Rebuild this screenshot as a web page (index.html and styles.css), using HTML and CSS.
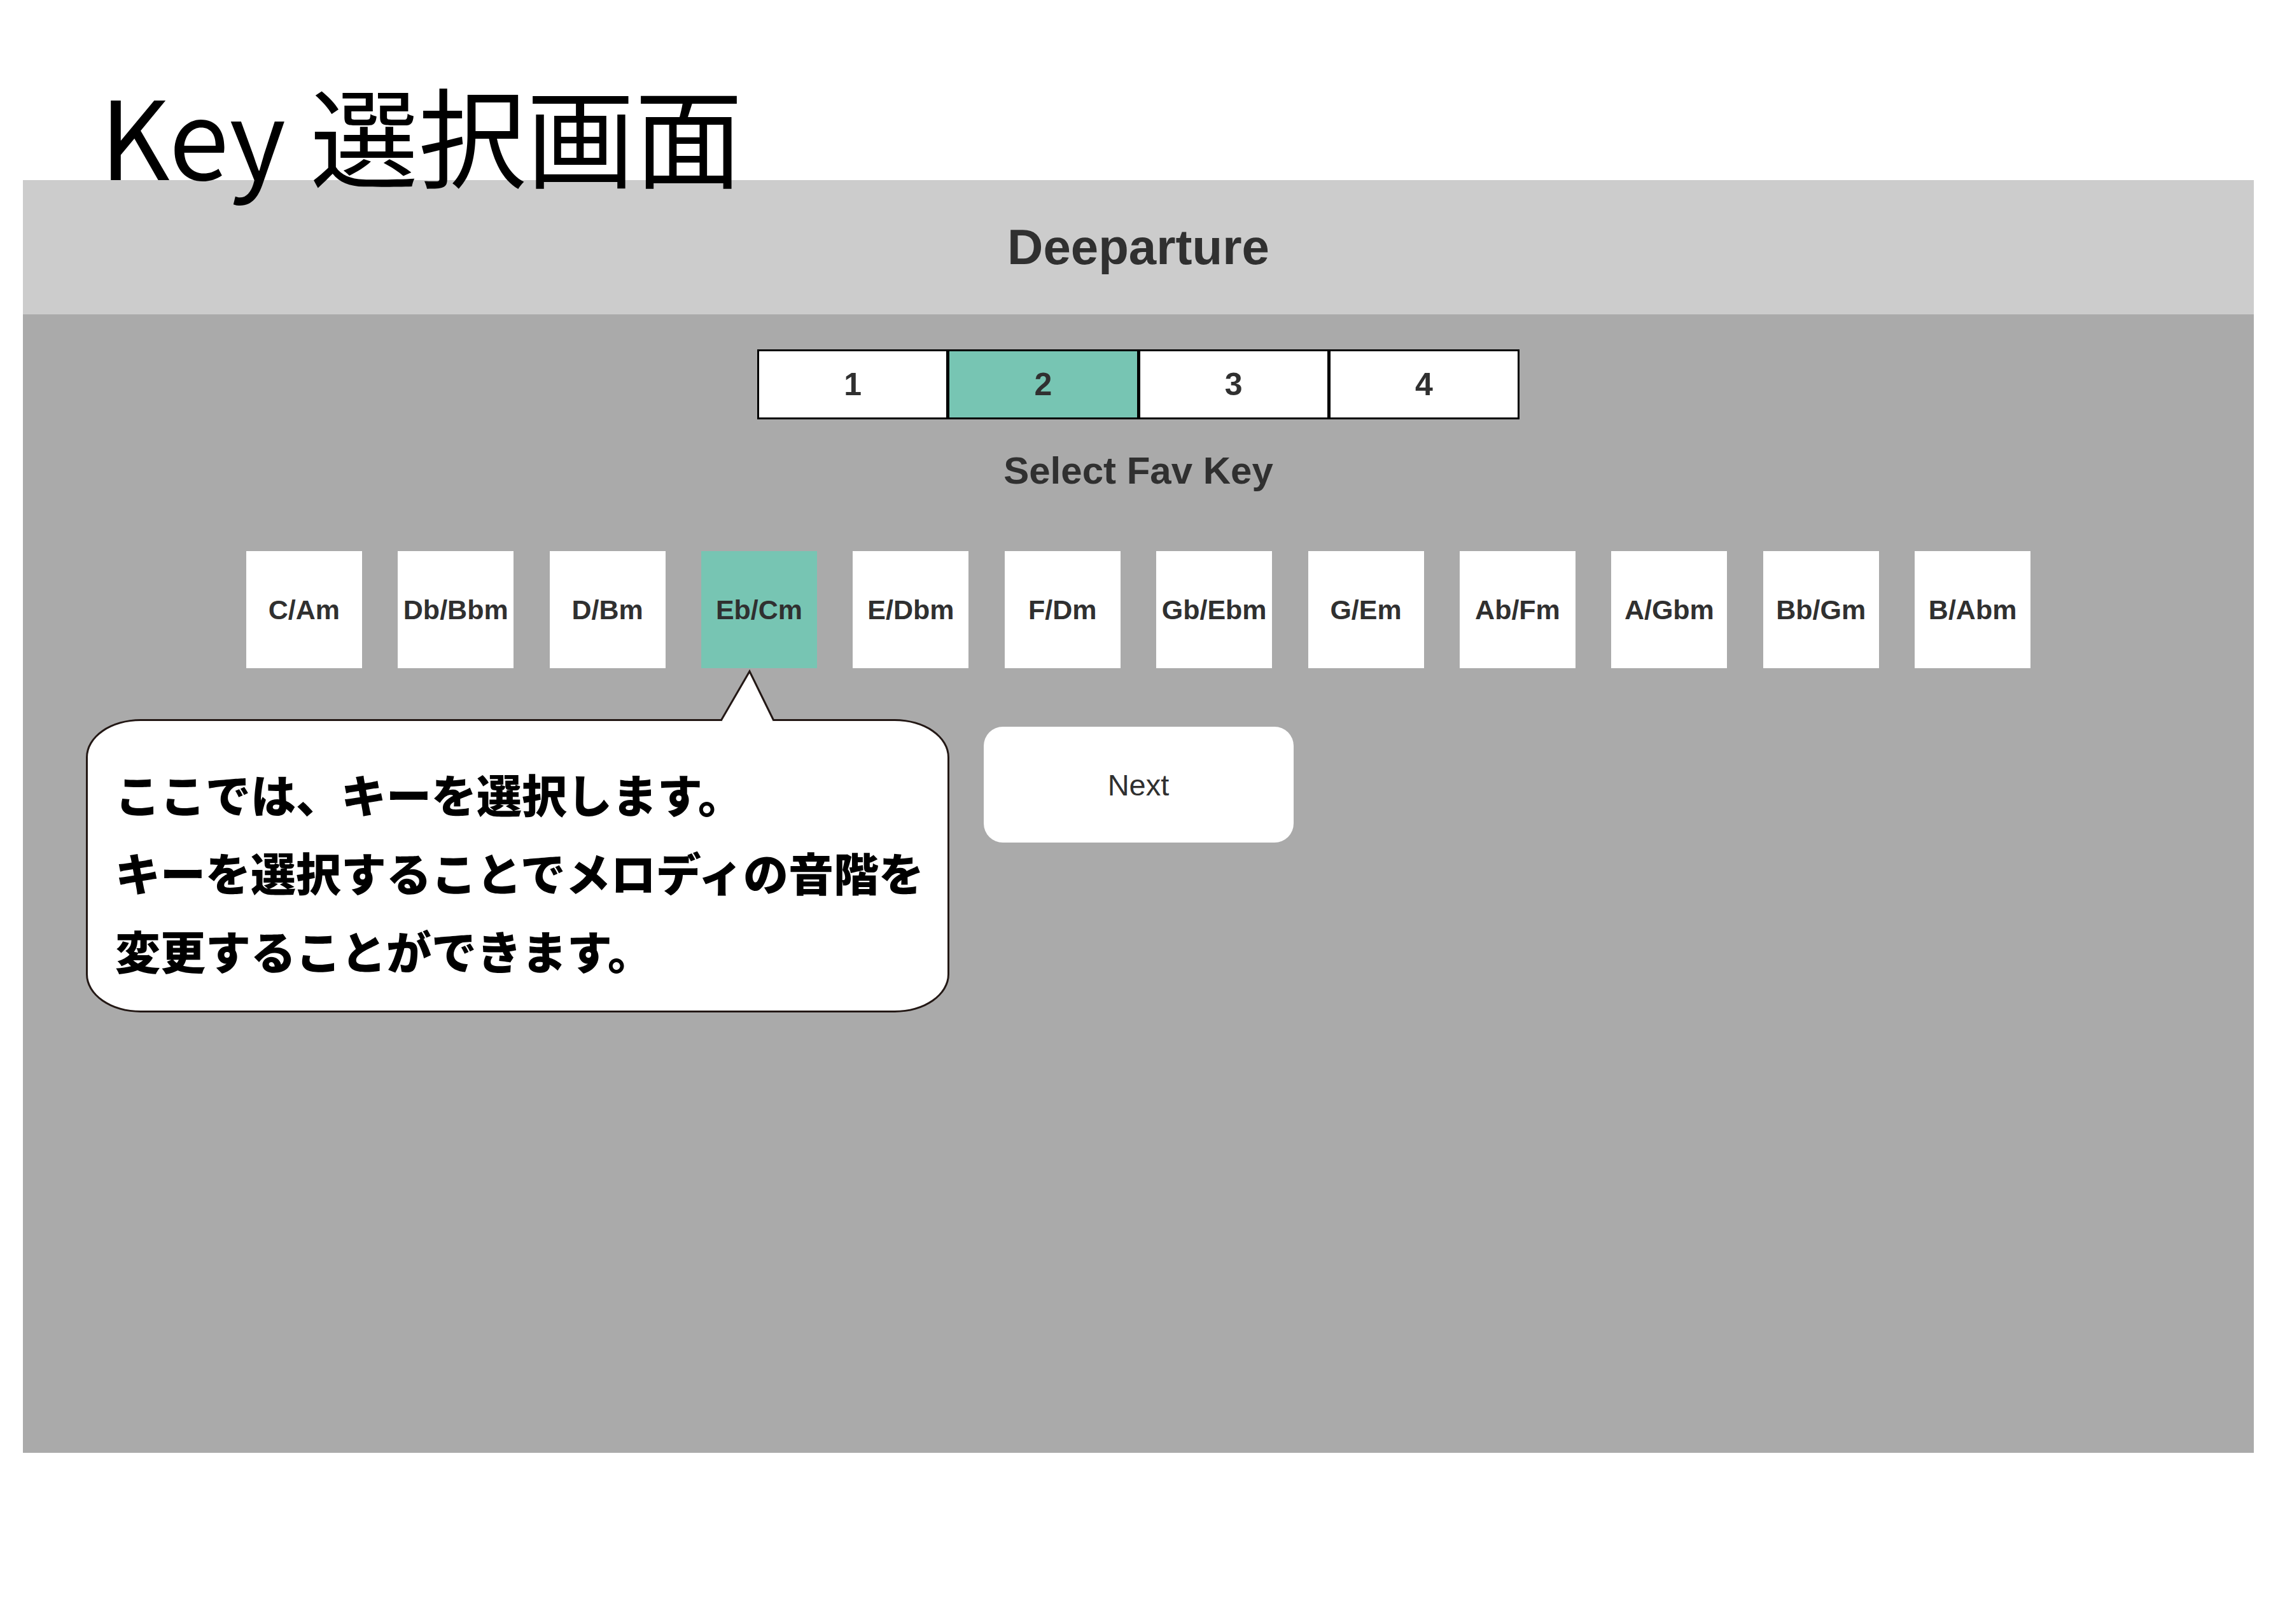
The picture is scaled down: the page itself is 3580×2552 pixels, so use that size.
FILE: index.html
```html
<!DOCTYPE html>
<html lang="ja">
<head>
<meta charset="utf-8">
<title>Key 選択画面</title>
<link rel="stylesheet" href="styles.css">
</head>
<body>
  <h1 class="page-title">Key 選択画面</h1>
  <div class="app">
    <header class="app-header">Deeparture</header>
    <main class="app-body">
      <div class="steps">
        <div class="step">1</div>
        <div class="step is-active">2</div>
        <div class="step">3</div>
        <div class="step">4</div>
      </div>
      <h2 class="section-title">Select Fav Key</h2>
      <div class="keys">
        <div class="key">C/Am</div>
        <div class="key">Db/Bbm</div>
        <div class="key">D/Bm</div>
        <div class="key is-active">Eb/Cm</div>
        <div class="key">E/Dbm</div>
        <div class="key">F/Dm</div>
        <div class="key">Gb/Ebm</div>
        <div class="key">G/Em</div>
        <div class="key">Ab/Fm</div>
        <div class="key">A/Gbm</div>
        <div class="key">Bb/Gm</div>
        <div class="key">B/Abm</div>
      </div>
      <button class="next-btn" type="button">Next</button>

      <div class="callout">
        <svg class="callout-pointer" width="90" height="86" viewBox="0 0 90 86" aria-hidden="true">
          <rect x="5" y="76" width="80" height="7" fill="#ffffff"/>
          <polyline points="3,80.5 48,3 86,80.5" fill="#ffffff" stroke="#231815" stroke-width="3" stroke-linejoin="miter"/>
        </svg>
        <p class="callout-line">ここでは、キーを選択します。</p>
        <p class="callout-line">キーを選択することでメロディの音階を</p>
        <p class="callout-line">変更することができます。</p>
      </div>
    </main>
  </div>
</body>
</html>
```
FILE: styles.css
```css
html, body {
  margin: 0;
  padding: 0;
  background: #ffffff;
}

body {
  width: 3580px;
  height: 2552px;
  font-family: "Liberation Sans", Arial, "Noto Sans CJK JP", sans-serif;
}

.page-title {
  position: relative;
  z-index: 2;
  margin: 0;
  box-sizing: border-box;
  height: 283px;
  padding: 109px 0 0 157px;
  font-family: "Noto Sans CJK JP", "Noto Sans", sans-serif;
  font-weight: 400;
  font-size: 170px;
  line-height: 200px;
  color: #000000;
  white-space: nowrap;
}

.app {
  position: relative;
  z-index: 1;
  margin-left: 36px;
  width: 3506px;
  height: 2000px;
  background: #aaaaaa;
  display: flex;
  flex-direction: column;
}

.app-header {
  height: 211px;
  flex: 0 0 auto;
  background: #cccccc;
  display: flex;
  align-items: center;
  justify-content: center;
  font-weight: 700;
  font-size: 78px;
  color: #303030;
}

.app-body {
  flex: 1 1 auto;
  display: flex;
  flex-direction: column;
  align-items: center;
}

.steps {
  margin-top: 55px;
  box-sizing: border-box;
  width: 1198px;
  height: 110px;
  border: 3px solid #000000;
  display: flex;
}

.step {
  flex: 1 1 0;
  display: flex;
  align-items: center;
  justify-content: center;
  background: #ffffff;
  font-weight: 700;
  font-size: 50px;
  color: #303030;
}

.step + .step {
  border-left: 5px solid #000000;
}

.step.is-active {
  background: #77c5b3;
}

.section-title {
  margin: 41px 0 0;
  font-weight: 700;
  font-size: 60px;
  line-height: 80px;
  color: #303030;
}

.keys {
  margin-top: 86px;
  display: flex;
  gap: 56.4px;
}

.key {
  width: 182px;
  height: 184px;
  display: flex;
  align-items: center;
  justify-content: center;
  background: #ffffff;
  font-weight: 700;
  font-size: 43px;
  color: #303030;
  white-space: nowrap;
}

.key.is-active {
  background: #77c5b3;
}

.next-btn {
  margin-top: 92px;
  width: 487px;
  height: 182px;
  border: none;
  border-radius: 30px;
  background: #ffffff;
  font-family: "Liberation Sans", Arial, sans-serif;
  font-weight: 400;
  font-size: 47px;
  color: #303030;
  padding: 0;
}

.callout {
  position: absolute;
  left: 99px;
  top: 847px;
  box-sizing: border-box;
  width: 1357px;
  height: 461px;
  padding: 52px 0 0 43px;
  background: #ffffff;
  border: 3px solid #231815;
  border-radius: 86px / 60px;
  font-family: "Noto Sans CJK JP", "Noto Sans", sans-serif;
  font-weight: 900;
  font-size: 71px;
  line-height: 123px;
  color: #000000;
}

.callout-pointer {
  position: absolute;
  left: 992px;
  top: -81px;
  overflow: visible;
}

.callout-line {
  margin: 0;
  white-space: nowrap;
}
```
